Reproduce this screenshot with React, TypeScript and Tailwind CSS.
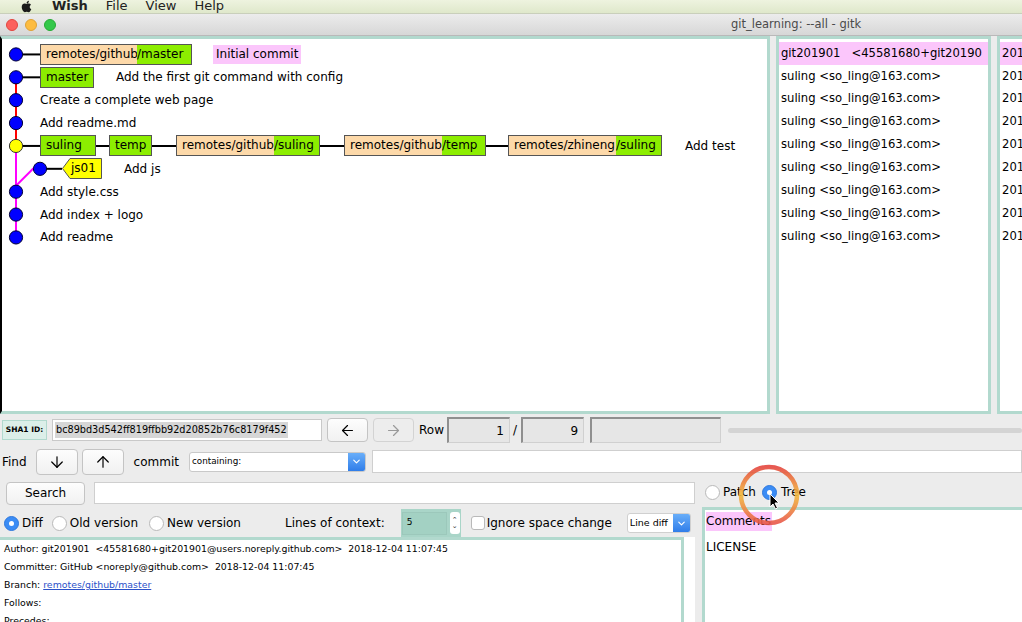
import React from 'react';
import { FaApple } from 'react-icons/fa';
import { ArrowDown, ArrowUp, ArrowLeft, ArrowRight, ChevronDown } from 'lucide-react';

function Row({ children, className = '' }: { children?: React.ReactNode; className?: string }) {
  return <div className={`h-[22.875px] flex items-center whitespace-nowrap ${className}`}>{children}</div>;
}

function Line({ className }: { className: string }) {
  return <div className={`h-[2px] bg-black ${className}`} />;
}

function Radio({ on = false }: { on?: boolean }) {
  return on ? (
    <div className="w-[15px] h-[15px] rounded-full bg-[#3b8cf5] border border-[#2f78dc] flex items-center justify-center shrink-0">
      <div className="w-[5px] h-[5px] rounded-full bg-white" />
    </div>
  ) : (
    <div className="w-[15px] h-[15px] rounded-full bg-white border border-[#b9b9b9] shrink-0" />
  );
}

function Btn({ className = '', children }: { className?: string; children?: React.ReactNode }) {
  return (
    <div
      className={`flex items-center justify-center rounded-[4px] border border-[#c4c4c4] bg-gradient-to-b from-[#fdfdfd] to-[#f1f1f1] ${className}`}
    >
      {children}
    </div>
  );
}

const graphRows = [
  'Initial commit',
  'Add the first git command with config',
  'Create a complete web page',
  'Add readme.md',
  'Add test',
  'Add js',
  'Add style.css',
  'Add index + logo',
  'Add readme',
];

export default function App() {
  const cy = (i: number) => 15.44 + i * 22.875;
  return (
    <div className="relative w-[1022px] h-[622px] overflow-hidden bg-[#ececec] font-['DejaVu_Sans',sans-serif] text-[12px] text-black">
      {/* mac menu bar (cut off) */}
      <div className="h-[14px] bg-gradient-to-b from-[#eef3df] to-[#dfe8cb] border-b border-[#c9cfbb] flex items-start overflow-hidden">
        <div className="flex items-center h-[14px] -mt-[1px] text-[13px] text-[#222]">
          <FaApple className="ml-[20px] w-[13px] h-[13px] text-[#1b1b1b]" />
          <span className="ml-[19px] font-bold">Wish</span>
          <span className="ml-[18px]">File</span>
          <span className="ml-[18px]">View</span>
          <span className="ml-[18px]">Help</span>
        </div>
      </div>

      {/* title bar */}
      <div className="h-[22px] bg-gradient-to-b from-[#ececec] to-[#d7d7d7] border-b border-[#b9b9b9] flex items-center">
        <div className="ml-[6px] w-[12px] h-[12px] rounded-full bg-[#fc615d] border border-[#e2463f]" />
        <div className="ml-[7px] w-[12px] h-[12px] rounded-full bg-[#fdbc40] border border-[#dea236]" />
        <div className="ml-[7px] w-[12px] h-[12px] rounded-full bg-[#34c84a] border border-[#27aa35]" />
        <span className="ml-[675px] text-[11.5px] text-[#4a4a4a] whitespace-nowrap">git_learning: --all - gitk</span>
      </div>

      {/* top panes */}
      <div className="h-[378px] flex">
        {/* graph pane */}
        <div className="w-[770px] h-full bg-white border-l-2 border-l-black border-t-[3px] border-r-[3px] border-b-[3px] border-t-[#b2d9ce] border-r-[#b2d9ce] border-b-[#b2d9ce]">
          <div className="relative pt-[4px]">
            <svg className="absolute left-0 top-0" width="70" height="222">
              <line x1="14" y1={cy(0)} x2="38" y2={cy(0)} stroke="#000" strokeWidth="2" />
              <line x1="14" y1={cy(1)} x2="38" y2={cy(1)} stroke="#000" strokeWidth="2" />
              <line x1="14" y1={cy(4)} x2="38" y2={cy(4)} stroke="#000" strokeWidth="2" />
              <line x1="38" y1={cy(5)} x2="60" y2={cy(5)} stroke="#000" strokeWidth="2" />
              <line x1="14" y1={cy(1)} x2="14" y2={cy(4)} stroke="#ff0000" strokeWidth="2" />
              <line x1="14" y1={cy(4)} x2="14" y2={cy(8)} stroke="#ff00ff" strokeWidth="2" />
              <polyline points={`38,${cy(5)} 31,${cy(5)} 14,${cy(5) + 17}`} fill="none" stroke="#ff00ff" strokeWidth="2" />
              {[0, 1, 2, 3, 6, 7, 8].map((i) => (
                <circle key={i} cx="14" cy={cy(i)} r="6.6" fill="#0000ff" stroke="#000033" strokeWidth="1" />
              ))}
              <circle cx="14" cy={cy(4)} r="6.6" fill="#ffff00" stroke="#333" strokeWidth="1" />
              <circle cx="38" cy={cy(5)} r="6.6" fill="#0000ff" stroke="#000033" strokeWidth="1" />
            </svg>

            <Row className="pl-[38px]">
              <div className="flex h-[21px] w-[152px] border border-[#555]">
                <span className="w-[96px] bg-[#fdd9a9] pl-[5px] leading-[19px]">remotes/github</span>
                <span className="flex-1 bg-[#8ced00] leading-[19px]">/master</span>
              </div>
              <span className="ml-[21px] bg-[#fbc6fb] px-[3px] leading-[19px]">{graphRows[0]}</span>
            </Row>
            <Row className="pl-[38px]">
              <div className="flex h-[21px] w-[54px] border border-[#555] bg-[#8ced00] pl-[5px] leading-[19px]">master</div>
              <span className="ml-[22px]">{graphRows[1]}</span>
            </Row>
            <Row className="pl-[38px]">{graphRows[2]}</Row>
            <Row className="pl-[38px]">{graphRows[3]}</Row>
            <Row className="pl-[38px]">
              <div className="h-[21px] w-[56px] border border-[#555] bg-[#8ced00] pl-[5px] leading-[19px]">suling</div>
              <Line className="w-[13px]" />
              <div className="h-[21px] w-[43px] border border-[#555] bg-[#8ced00] pl-[5px] leading-[19px]">temp</div>
              <Line className="w-[24px]" />
              <div className="flex h-[21px] w-[144px] border border-[#555]">
                <span className="w-[97px] bg-[#fdd9a9] pl-[5px] leading-[19px]">remotes/github</span>
                <span className="flex-1 bg-[#8ced00] leading-[19px]">/suling</span>
              </div>
              <Line className="w-[24px]" />
              <div className="flex h-[21px] w-[142px] border border-[#555]">
                <span className="w-[97px] bg-[#fdd9a9] pl-[5px] leading-[19px]">remotes/github</span>
                <span className="flex-1 bg-[#8ced00] leading-[19px]">/temp</span>
              </div>
              <Line className="w-[22px]" />
              <div className="flex h-[21px] w-[154px] border border-[#555]">
                <span className="w-[107px] bg-[#fdd9a9] pl-[5px] leading-[19px]">remotes/zhineng</span>
                <span className="flex-1 bg-[#8ced00] leading-[19px]">/suling</span>
              </div>
              <span className="ml-[23px]">{graphRows[4]}</span>
            </Row>
            <Row className="pl-[60px]">
              <div className="relative w-[40px] h-[21px]">
                <svg className="absolute left-0 top-0" width="40" height="21">
                  <polygon points="0.5,10.5 8,0.5 39.5,0.5 39.5,20.5 8,20.5" fill="#ffff00" stroke="#555" strokeWidth="1" />
                </svg>
                <span className="absolute left-[9px] top-0 leading-[21px]">js01</span>
              </div>
              <span className="ml-[22px]">{graphRows[5]}</span>
            </Row>
            <Row className="pl-[38px]">{graphRows[6]}</Row>
            <Row className="pl-[38px]">{graphRows[7]}</Row>
            <Row className="pl-[38px]">{graphRows[8]}</Row>
          </div>
        </div>

        {/* author pane */}
        <div className="ml-[6px] w-[215px] h-full bg-white border-[3px] border-[#b2d9ce] overflow-hidden">
          <div className="pt-[3px] text-[11.6px]">
            <Row className="bg-[#fbc6fb] pl-[2px] overflow-hidden">git201901&nbsp;&nbsp; &lt;45581680+git20190</Row>
            {Array.from({ length: 8 }).map((_, i) => (
              <Row key={i} className="pl-[2px]">suling &lt;so_ling@163.com&gt;</Row>
            ))}
          </div>
        </div>

        {/* date pane */}
        <div className="ml-[6px] w-[25px] h-full bg-white border-l-[3px] border-t-[3px] border-b-[3px] border-[#b2d9ce] overflow-hidden">
          <div className="pt-[3px] text-[11.6px]">
            <Row className="bg-[#fbc6fb] pl-[2px] overflow-hidden">201</Row>
            {Array.from({ length: 8 }).map((_, i) => (
              <Row key={i} className="pl-[2px] overflow-hidden">201</Row>
            ))}
          </div>
        </div>
      </div>

      {/* SHA row */}
      <div className="h-[32px] flex items-center whitespace-nowrap">
        <div className="ml-[2px] w-[45px] h-[20px] bg-[#dcefe9] border border-[#b2d9ce] text-[7.5px] font-bold flex items-center justify-center">
          SHA1 ID:
        </div>
        <div className="ml-[5px] w-[270px] h-[22px] bg-white border border-[#c9c9c9] flex items-center pl-[2px]">
          <span className="bg-[#d6d6d6] text-[9.7px] px-[1px] leading-[16px]">bc89bd3d542ff819ffbb92d20852b76c8179f452</span>
        </div>
        <Btn className="ml-[5px] w-[41px] h-[24px]">
          <ArrowLeft size={17} strokeWidth={1.7} className="text-black" />
        </Btn>
        <div className="ml-[5px] w-[41px] h-[24px] flex items-center justify-center rounded-[4px] border border-[#d3d3d3] bg-[#ededed]">
          <ArrowRight size={17} strokeWidth={1.7} className="text-[#9a9a9a]" />
        </div>
        <span className="ml-[5px]">Row</span>
        <div className="ml-[3px] w-[63px] h-[26px] bg-[#e6e6e6] border-t-2 border-l-2 border-[#8f8f8f] border-r border-b border-r-[#d0d0d0] border-b-[#d0d0d0] flex items-center justify-end pr-[5px]">
          1
        </div>
        <span className="ml-[3px]">/</span>
        <div className="ml-[4px] w-[63px] h-[26px] bg-[#e6e6e6] border-t-2 border-l-2 border-[#8f8f8f] border-r border-b border-r-[#d0d0d0] border-b-[#d0d0d0] flex items-center justify-end pr-[5px]">
          9
        </div>
        <div className="ml-[6px] w-[131px] h-[26px] bg-[#e6e6e6] border-t-2 border-l-2 border-[#8f8f8f] border-r border-b border-r-[#d0d0d0] border-b-[#d0d0d0]" />
        <div className="ml-[7px] flex-1 h-[5px] rounded-full bg-[#d4d4d4]" />
      </div>

      {/* Find row */}
      <div className="h-[31px] flex items-center whitespace-nowrap">
        <span className="ml-[2px]">Find</span>
        <Btn className="ml-[9px] w-[42px] h-[26px]">
          <ArrowDown size={18} strokeWidth={1.6} />
        </Btn>
        <Btn className="ml-[4px] w-[42px] h-[26px]">
          <ArrowUp size={18} strokeWidth={1.6} />
        </Btn>
        <span className="ml-[10px]">commit</span>
        <div className="ml-[10px] w-[177px] h-[20px] bg-white border border-[#c9c9c9] rounded-[3px] flex items-center overflow-hidden">
          <span className="flex-1 pl-[2px] text-[8.8px]">containing:</span>
          <div className="w-[17px] h-full bg-gradient-to-b from-[#69aef9] to-[#2f7de9] flex items-center justify-center">
            <ChevronDown size={11} strokeWidth={2.5} className="text-white" />
          </div>
        </div>
        <div className="ml-[6px] flex-1 h-[23px] bg-white border border-[#cfcfcf]" />
      </div>

      {/* lower section */}
      <div className="flex h-[145px]">
        <div className="w-[700px] flex flex-col">
          {/* search */}
          <div className="h-[32px] shrink-0 flex items-center">
            <Btn className="ml-[6px] w-[79px] h-[23px]">Search</Btn>
            <div className="ml-[9px] w-[601px] h-[22px] bg-white border border-[#cfcfcf]" />
          </div>
          {/* diff options */}
          <div className="h-[28px] shrink-0 flex items-center whitespace-nowrap">
            <div className="ml-[4px]"><Radio on /></div>
            <span className="ml-[3px]">Diff</span>
            <div className="ml-[9px]"><Radio /></div>
            <span className="ml-[3px]">Old version</span>
            <div className="ml-[11px]"><Radio /></div>
            <span className="ml-[3px]">New version</span>
            <span className="ml-[44px]">Lines of context:</span>
            <div className="ml-[16px] w-[60px] h-[28px] bg-[#a9d5c8] flex items-center">
              <div className="ml-[1px] w-[45px] h-[23px] bg-[#a3d1c3] border border-[#9cc8bb] flex items-center pl-[4px] text-[9px]">5</div>
              <div className="ml-[3px] w-[10px] h-[22px] bg-white rounded-[3px] flex flex-col items-center justify-center text-[7px] leading-[7px] text-[#333]">
                <span>⌃</span>
                <span className="-mt-[1px]">⌄</span>
              </div>
            </div>
            <div className="ml-[10px] w-[14px] h-[14px] bg-white border border-[#b9b9b9] rounded-[3px]" />
            <span className="ml-[2px]">Ignore space change</span>
            <div className="ml-[15px] w-[64px] h-[20px] bg-white border border-[#d0d0d0] rounded-[3px] flex items-center overflow-hidden">
              <span className="flex-1 pl-[2px] text-[9.5px]">Line diff</span>
              <div className="w-[17px] h-full bg-gradient-to-b from-[#69aef9] to-[#2f7de9] flex items-center justify-center">
                <ChevronDown size={11} strokeWidth={2.5} className="text-white" />
              </div>
            </div>
          </div>
          {/* details pane */}
          <div className="flex-1 min-h-0 flex overflow-hidden">
            <div className="w-[684px] bg-white border-t-[3px] border-r-[3px] border-[#b2d9ce] text-[9.4px] whitespace-nowrap">
              <div className="h-[18px] flex items-center pl-[4px]">
                Author: git201901&nbsp; &lt;45581680+git201901@users.noreply.github.com&gt;&nbsp; 2018-12-04 11:07:45
              </div>
              <div className="h-[18px] flex items-center pl-[4px]">
                Committer: GitHub &lt;noreply@github.com&gt;&nbsp; 2018-12-04 11:07:45
              </div>
              <div className="h-[18px] flex items-center pl-[4px]">
                Branch:&nbsp;<span className="text-[#2b52c9] underline">remotes/github/master</span>
              </div>
              <div className="h-[18px] flex items-center pl-[4px]">Follows:</div>
              <div className="h-[18px] flex items-center pl-[4px]">Precedes:</div>
            </div>
            <div className="w-[11px] bg-white" />
          </div>
        </div>

        <div className="flex-1 flex flex-col">
          <div className="h-[30px] shrink-0 flex items-center whitespace-nowrap">
            <div className="ml-[5px]"><Radio /></div>
            <span className="ml-[3px]">Patch</span>
            <div className="ml-[6px]"><Radio on /></div>
            <span className="ml-[4px]">Tree</span>
          </div>
          <div className="ml-[2px] flex-1 min-h-0 bg-white border-l-[3px] border-t-[3px] border-[#b2d9ce] pt-[2px] pl-[1px]">
            <div className="h-[19px] flex items-center">
              <span className="bg-[#fbc6fb] pr-[1px] leading-[19px]">Comments</span>
            </div>
            <div className="h-[18px] mt-[7px] flex items-center">LICENSE</div>
          </div>
        </div>
      </div>

      {/* click highlight + cursor overlay */}
      <svg className="absolute left-[737px] top-[463px] pointer-events-none" width="66" height="66">
        <defs>
          <linearGradient id="ring" x1="0" y1="0" x2="0" y2="1">
            <stop offset="0" stopColor="#e4463f" />
            <stop offset="0.5" stopColor="#f3b93b" />
            <stop offset="1" stopColor="#e8574a" />
          </linearGradient>
        </defs>
        <circle cx="32" cy="32" r="28" fill="none" stroke="url(#ring)" strokeWidth="4.5" opacity="0.9" />
        <path d="M33 31 L33 44 L36 41 L38.5 46 L40.5 45 L38 40 L42 40 Z" fill="#000" stroke="#fff" strokeWidth="1" />
      </svg>
    </div>
  );
}
